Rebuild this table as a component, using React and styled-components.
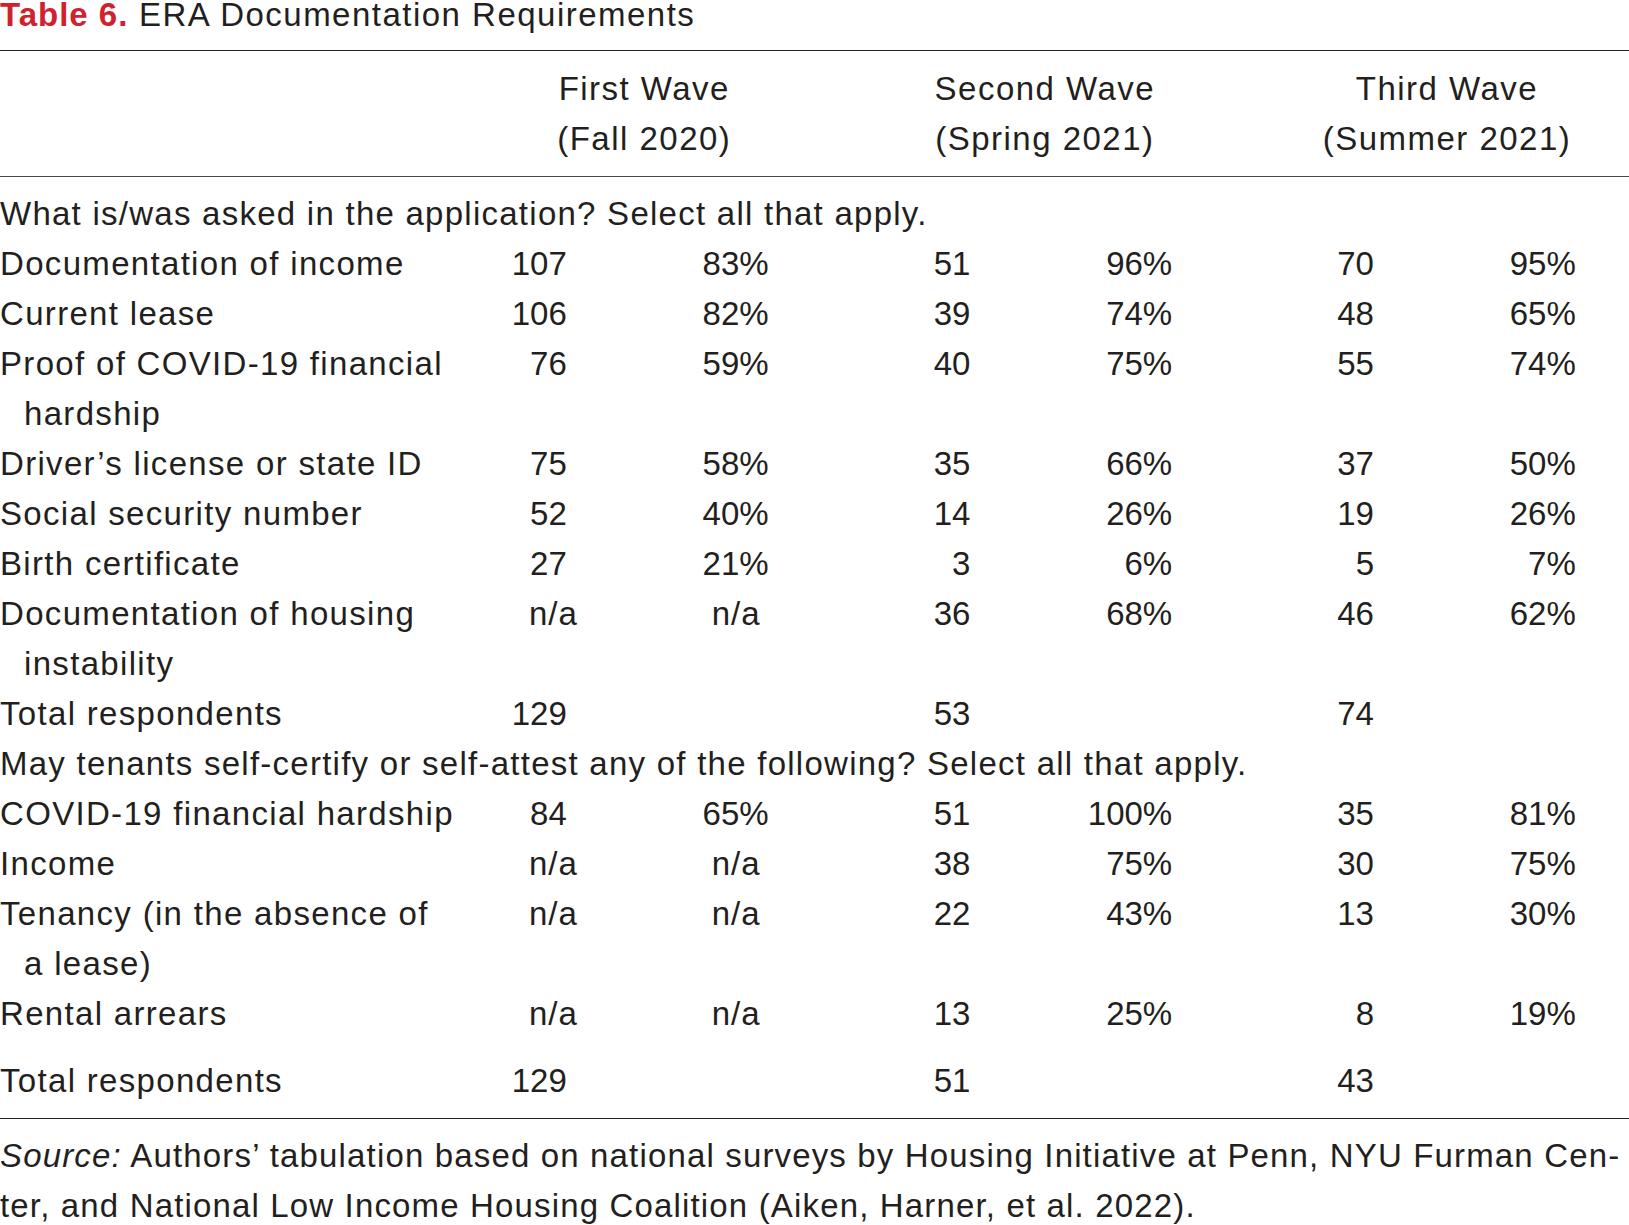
import styled, { createGlobalStyle } from "styled-components";

const GlobalStyle = createGlobalStyle`
  html, body { margin: 0; padding: 0; background: #ffffff; }
  body {
    font-family: "Liberation Sans", Arial, sans-serif;
    color: #231f20;
  }
`;

const COLS = "365px repeat(6, 201.8px)";

const Page = styled.div`
  width: 1629px;
  font-size: 33px;
`;

const Title = styled.h1`
  margin: 0;
  padding-bottom: 20px;
  font-size: 33px;
  font-weight: 400;
  line-height: 30px;
  letter-spacing: 0.045em;
  white-space: nowrap;
  border-bottom: 1px solid #231f20;
  & b {
    color: #d0222e;
    font-weight: 700;
    letter-spacing: 0.03em;
  }
`;

const Head = styled.div`
  display: grid;
  grid-template-columns: ${COLS};
  padding: 13px 0 12px;
  line-height: 50px;
  letter-spacing: 0.045em;
  border-bottom: 1px solid #4a4748;
`;

const HeadCell = styled.div`
  grid-column: span 2;
  padding-left: ${p => p.$shift}px;
  text-align: center;
  white-space: nowrap;
`;

const Body = styled.div`
  padding: 12px 0 12px;
  border-bottom: 1px solid #231f20;
`;

const Section = styled.div`
  line-height: 50px;
  white-space: nowrap;
  letter-spacing: 0.038em;
`;

const Row = styled.div`
  display: grid;
  grid-template-columns: ${COLS};
  align-items: start;
  line-height: 50px;
  margin-top: ${p => p.$gap || 0}px;
`;

const Label = styled.div`
  white-space: nowrap;
  letter-spacing: 0.04em;
`;

const Cont = styled.span`
  display: block;
  padding-left: 24px;
`;

const Value = styled.div`
  text-align: right;
  white-space: nowrap;
`;

const Na = styled.span`
  display: inline-block;
  letter-spacing: 0.03em;
  margin-right: ${p => (p.$pct ? 8 : -11)}px;
`;

const Source = styled.div`
  padding: 12px 13px 0 0;
  line-height: 50px;
  letter-spacing: 0.035em;
  & i {
    font-style: italic;
  }
`;

const Justified = styled.div`
  text-align: justify;
  text-align-last: justify;
  white-space: nowrap;
`;

const sections = [
  {
    title: "What is/was asked in the application? Select all that apply.",
    rows: [
      [["Documentation of income"], "107", "83%", "51", "96%", "70", "95%"],
      [["Current lease"], "106", "82%", "39", "74%", "48", "65%"],
      [["Proof of COVID-19 financial", "hardship"], "76", "59%", "40", "75%", "55", "74%"],
      [["Driver’s license or state ID"], "75", "58%", "35", "66%", "37", "50%"],
      [["Social security number"], "52", "40%", "14", "26%", "19", "26%"],
      [["Birth certificate"], "27", "21%", "3", "6%", "5", "7%"],
      [["Documentation of housing", "instability"], "n/a", "n/a", "36", "68%", "46", "62%"],
      [["Total respondents"], "129", "", "53", "", "74", ""],
    ],
  },
  {
    title: "May tenants self-certify or self-attest any of the following? Select all that apply.",
    rows: [
      [["COVID-19 financial hardship"], "84", "65%", "51", "100%", "35", "81%"],
      [["Income"], "n/a", "n/a", "38", "75%", "30", "75%"],
      [["Tenancy (in the absence of", "a lease)"], "n/a", "n/a", "22", "43%", "13", "30%"],
      [["Rental arrears"], "n/a", "n/a", "13", "25%", "8", "19%"],
      [["Total respondents"], "129", "", "51", "", "43", "", 17],
    ],
  },
];

const waves = [
  ["First Wave", "(Fall 2020)", 155],
  ["Second Wave", "(Spring 2021)", 149],
  ["Third Wave", "(Summer 2021)", 146],
];

function TableRow({ row }) {
  const [lines, ...rest] = row;
  const values = rest.slice(0, 6);
  const gap = rest[6];
  return (
    <Row $gap={gap}>
      <Label>
        {lines[0]}
        {lines.slice(1).map(l => <Cont key={l}>{l}</Cont>)}
      </Label>
      {values.map((v, i) => (
        <Value key={i}>
          {v === "n/a" ? <Na $pct={i % 2 === 1}>n/a</Na> : v}
        </Value>
      ))}
    </Row>
  );
}

export default function App() {
  return (
    <Page>
      <GlobalStyle />
      <Title>
        <b>Table 6.</b> ERA Documentation Requirements
      </Title>
      <Head>
        <div />
        {waves.map(([a, b, shift]) => (
          <HeadCell key={a} $shift={shift}>
            {a}
            <br />
            {b}
          </HeadCell>
        ))}
      </Head>
      <Body>
        {sections.map(s => (
          <div key={s.title}>
            <Section>{s.title}</Section>
            {s.rows.map((r, i) => <TableRow key={i} row={r} />)}
          </div>
        ))}
      </Body>
      <Source>
        <Justified>
          <i>Source:</i> Authors’ tabulation based on national surveys by Housing Initiative at Penn, NYU Furman Cen-
        </Justified>
        <div>ter, and National Low Income Housing Coalition (Aiken, Harner, et al. 2022).</div>
      </Source>
    </Page>
  );
}
